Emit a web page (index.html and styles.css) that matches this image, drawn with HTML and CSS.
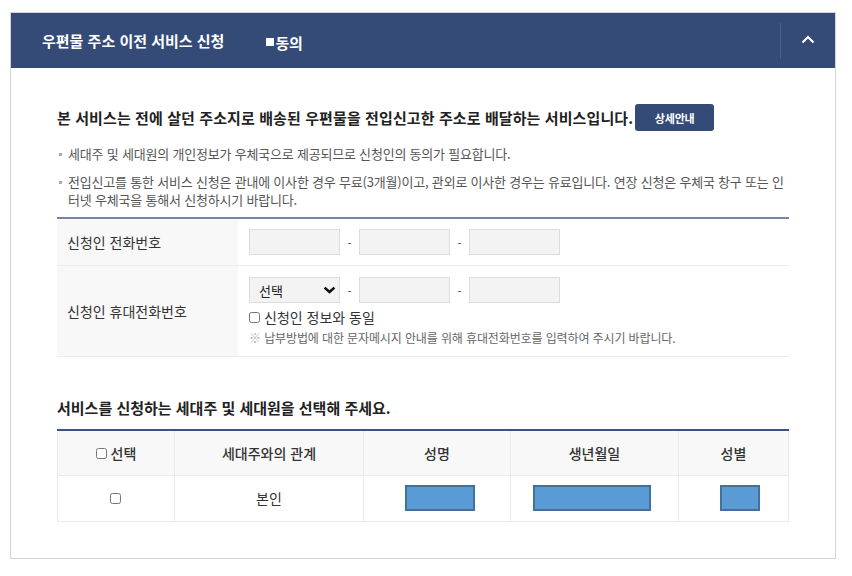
FILE: index.html
```html
<!DOCTYPE html>
<html lang="ko">
<head>
<meta charset="utf-8">
<title>우편물 주소 이전 서비스 신청</title>
<link rel="stylesheet" href="styles.css">
</head>
<body>
<div class="panel">
  <div class="panel-head">
    <h2 class="panel-title">우편물 주소 이전 서비스 신청</h2>
    <span class="agree"><span class="agree-mark"></span>동의</span>
    <div class="head-right">
      <span class="head-sep"></span>
      <button class="toggle" type="button" aria-label="접기">
        <svg width="14" height="9" viewBox="0 0 14 9"><path d="M1.5 7.5 L7 2 L12.5 7.5" fill="none" stroke="#fff" stroke-width="2.2"/></svg>
      </button>
    </div>
  </div>
  <div class="panel-body">
    <div class="intro">
      <h3 class="intro-title">본 서비스는 전에 살던 주소지로 배송된 우편물을 전입신고한 주소로 배달하는 서비스입니다.</h3>
      <button class="btn-detail" type="button">상세안내</button>
    </div>
    <ul class="notes">
      <li class="note"><span class="bullet"></span><span class="note-text">세대주 및 세대원의 개인정보가 우체국으로 제공되므로 신청인의 동의가 필요합니다.</span></li>
      <li class="note"><span class="bullet"></span><span class="note-text">전입신고를 통한 서비스 신청은 관내에 이사한 경우 무료(3개월)이고, 관외로 이사한 경우는 유료입니다. 연장 신청은 우체국 창구 또는 인<br>터넷 우체국을 통해서 신청하시기 바랍니다.</span></li>
    </ul>
    <div class="form">
      <div class="form-row">
        <div class="form-label">신청인 전화번호</div>
        <div class="form-field">
          <div class="phone">
            <span class="inp"></span><span class="dash">-</span><span class="inp"></span><span class="dash">-</span><span class="inp"></span>
          </div>
        </div>
      </div>
      <div class="form-row">
        <div class="form-label">신청인 휴대전화번호</div>
        <div class="form-field field-tall">
          <div class="phone">
            <span class="inp sel"><span>선택</span>
              <svg width="13" height="8" viewBox="0 0 13 8"><path d="M1.6 1.6 L6.5 6 L11.4 1.6" fill="none" stroke="#111" stroke-width="2.6"/></svg>
            </span><span class="dash">-</span><span class="inp"></span><span class="dash">-</span><span class="inp"></span>
          </div>
          <label class="same"><input type="checkbox" class="chk">신청인 정보와 동일</label>
          <p class="small-note"><span class="ref">※</span> 납부방법에 대한 문자메시지 안내를 위해 휴대전화번호를 입력하여 주시기 바랍니다.</p>
        </div>
      </div>
    </div>
    <h3 class="sec-title">서비스를 신청하는 세대주 및 세대원을 선택해 주세요.</h3>
    <table class="members">
      <colgroup>
        <col class="c1"><col class="c2"><col class="c3"><col class="c4"><col class="c5">
      </colgroup>
      <thead>
        <tr>
          <th><label class="th-chk"><input type="checkbox" class="chk">선택</label></th>
          <th>세대주와의 관계</th>
          <th>성명</th>
          <th>생년월일</th>
          <th>성별</th>
        </tr>
      </thead>
      <tbody>
        <tr>
          <td><input type="checkbox" class="chk"></td>
          <td>본인</td>
          <td><span class="mask mask-name"></span></td>
          <td><span class="mask mask-birth"></span></td>
          <td><span class="mask mask-sex"></span></td>
        </tr>
      </tbody>
    </table>
  </div>
</div>
</body>
</html>
```
FILE: styles.css
```css
* { box-sizing: border-box; }
body {
  margin: 0;
  background: #fff;
  font-family: "Noto Sans CJK KR", "Noto Sans", sans-serif;
  color: #333;
}
.panel {
  margin: 12px 0 0 10px;
  width: 826px;
  border: 1px solid #d4d4d4;
  background: #fff;
}
.panel-head {
  height: 55px;
  background: #344b77;
  display: flex;
  align-items: center;
  padding-left: 31px;
  color: #fff;
}
.panel-title {
  margin: 0;
  font-size: 15px;
  font-weight: 700;
  letter-spacing: 0;
}
.agree {
  margin-left: 42px;
  display: flex;
  align-items: center;
  font-size: 15px;
  font-weight: 700;
  letter-spacing: -0.3px;
  padding-top: 3px;
}
.agree-mark {
  width: 8px;
  height: 8px;
  background: #fff;
  margin-right: 1px;
}
.head-right {
  margin-left: auto;
  display: flex;
  align-items: center;
  height: 100%;
}
.head-sep {
  width: 1px;
  height: 36px;
  background: #4a5f88;
}
.toggle {
  width: 54px;
  height: 55px;
  border: 0;
  background: transparent;
  display: flex;
  align-items: center;
  justify-content: center;
  padding: 0 0 2px 0;
}
.panel-body {
  padding: 36px 46px 36px 46px;
}
.intro {
  display: flex;
  align-items: center;
  gap: 2px;
}
.intro-title {
  margin: 0;
  font-size: 15px;
  font-weight: 700;
  letter-spacing: 0.1px;
  color: #222;
}
.btn-detail {
  width: 79px;
  height: 27px;
  border: 0;
  border-radius: 3px;
  background: #344b77;
  color: #fff;
  font-family: inherit;
  font-size: 11px;
  font-weight: 700;
  letter-spacing: -0.2px;
  padding: 0;
}
.notes {
  list-style: none;
  margin: 14px 0 0 0;
  padding: 0;
  display: flex;
  flex-direction: column;
  gap: 10px;
}
.note {
  display: flex;
  gap: 6px;
  font-size: 13px;
  line-height: 18px;
  letter-spacing: -0.2px;
  color: #555;
  padding-left: 2px;
}
.note-text { white-space: nowrap; }
.bullet {
  flex: none;
  width: 3px;
  height: 3px;
  margin-top: 8px;
  background: #aaa;
}
.form {
  margin-top: 8px;
  border-top: 2px solid #7686a3;
}
.form-row {
  display: grid;
  grid-template-columns: 181px 1fr;
  border-bottom: 1px solid #ececec;
}
.form-label {
  background: #f8f8f8;
  display: flex;
  align-items: center;
  padding-left: 10px;
  font-size: 14px;
  color: #333;
}
.form-field {
  padding: 10px 11px 10px 11px;
}
.field-tall {
  padding: 11px 11px 10px 11px;
}
.phone {
  display: flex;
  align-items: center;
}
.inp {
  width: 91px;
  height: 26px;
  background: #f3f3f3;
  border: 1px solid #dcdcdc;
}
.sel {
  display: flex;
  align-items: center;
  justify-content: space-between;
  padding: 0 3px 0 9px;
  font-size: 13px;
  color: #222;
}
.dash {
  width: 19px;
  text-align: center;
  font-size: 12px;
  color: #555;
}
.same {
  display: flex;
  align-items: center;
  gap: 2px;
  margin-top: 5px;
  font-size: 14px;
  line-height: 18px;
  color: #333;
}
.chk {
  width: 11px;
  height: 11px;
  margin: 0 2px 0 0;
}
.small-note {
  margin: 4px 0 0 0;
  font-size: 12px;
  line-height: 16px;
  letter-spacing: -0.12px;
  color: #666;
}
.ref { color: #aaa; }
.sec-title {
  margin: 40px 0 0 0;
  font-size: 15px;
  line-height: 22px;
  font-weight: 700;
  letter-spacing: 0;
  color: #222;
}
.members {
  margin-top: 10px;
  width: 100%;
  border-collapse: collapse;
  table-layout: fixed;
  border-top: 2px solid #3a5285;
}
.c1 { width: 117px; }
.c2 { width: 189px; }
.c3 { width: 147px; }
.c4 { width: 168px; }
.c5 { width: 110px; }
.members th, .members td {
  border: 1px solid #eaeaea;
  text-align: center;
  font-size: 14px;
  color: #333;
  padding: 0;
}
.members th {
  height: 45px;
  background: #f8f8f8;
  font-weight: 500;
}
.members td {
  height: 46px;
  background: #fff;
}
.members tr:first-child th { border-top: 0; }
.th-chk {
  display: inline-flex;
  align-items: center;
  gap: 2px;
}
.mask {
  display: inline-block;
  vertical-align: middle;
  height: 26px;
  background: #5b9bd5;
  border: 2px solid #41719c;
}
.mask-name { width: 70px; margin-left: 6px; }
.mask-birth { width: 118px; margin-left: -6px; }
.mask-sex { width: 40px; margin-left: 12px; }
```
